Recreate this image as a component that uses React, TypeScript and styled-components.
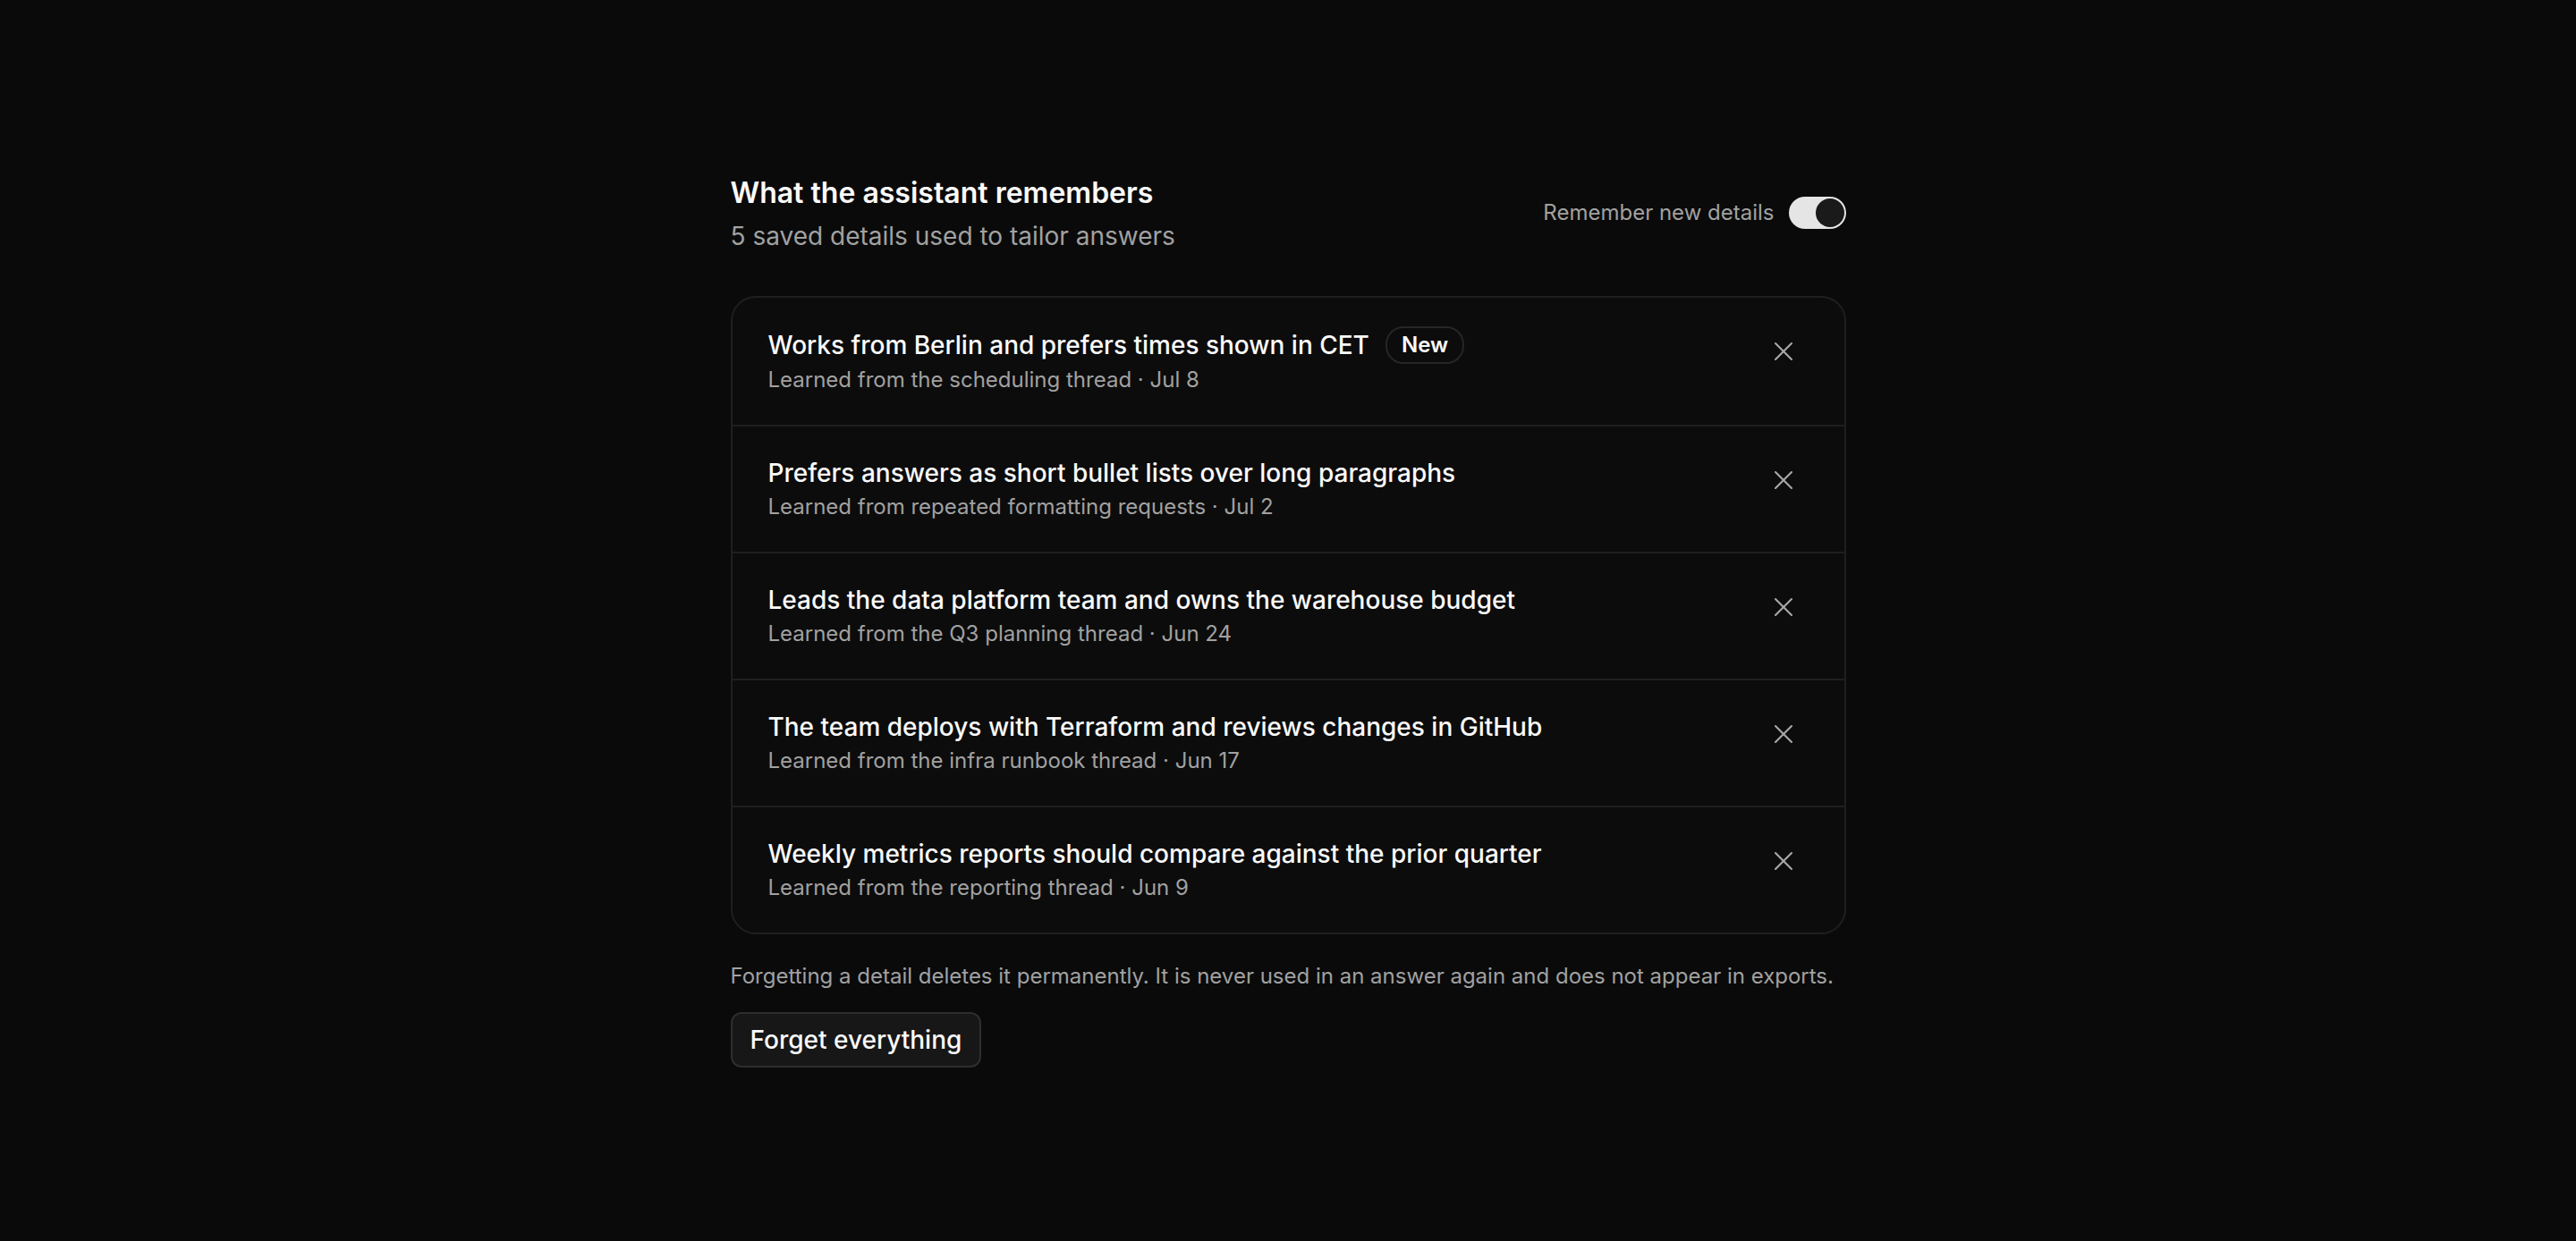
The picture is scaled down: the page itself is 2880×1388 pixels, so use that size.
import { useState } from "react";
import styled, { createGlobalStyle } from "styled-components";
import { X } from "lucide-react";

// ------------------------------------- STYLES -------------------------------------

const GlobalStyle = createGlobalStyle`
  html, body {
    margin: 0;
    background: #0a0a0a;
  }

  body {
    font-family: Inter, "Noto Sans", sans-serif;
    color: #fafafa;
    -webkit-font-smoothing: antialiased;
  }
`;

const Page = styled.main`
  min-height: 100vh;
  display: flex;
  justify-content: center;
  padding-top: 196px;
  box-sizing: border-box;
`;

const Panel = styled.section`
  width: 1247px;
  display: flex;
  flex-direction: column;
`;

const Header = styled.header`
  display: flex;
  justify-content: space-between;
  align-items: center;
  margin-bottom: 47px;
`;

const Titles = styled.div`
  display: flex;
  flex-direction: column;
  gap: 8px;
`;

const Heading = styled.h1`
  margin: 0;
  font-size: 32px;
  line-height: 40px;
  font-weight: 600;
  color: #fafafa;
`;

const Subtitle = styled.p`
  margin: 0;
  font-size: 28px;
  line-height: 40px;
  color: #a1a1a1;
`;

const ToggleLabel = styled.label`
  display: flex;
  align-items: center;
  gap: 16px;
  padding-bottom: 5px;
  font-size: 24px;
  color: #a1a1a1;
  cursor: pointer;
`;

const Track = styled.button<{ $on: boolean }>`
  position: relative;
  width: 64px;
  height: 36px;
  padding: 0;
  border: 0;
  border-radius: 18px;
  background: ${(p) => (p.$on ? "#e5e5e5" : "#3a3a3a")};
  cursor: pointer;
`;

const Knob = styled.span<{ $on: boolean }>`
  position: absolute;
  top: 2px;
  left: ${(p) => (p.$on ? "30px" : "2px")};
  width: 32px;
  height: 32px;
  border-radius: 50%;
  background: #1a1a1a;
  transition: left 0.15s ease;
`;

const List = styled.ul`
  margin: 0;
  padding: 0;
  list-style: none;
  border: 2px solid #1f1f1f;
  border-radius: 28px;
  background: #0c0c0c;
  overflow: hidden;
`;

const Row = styled.li`
  display: flex;
  align-items: flex-start;
  justify-content: space-between;
  padding: 32px 40px;

  & + & {
    border-top: 2px solid #1f1f1f;
  }
`;

const RowText = styled.div`
  display: flex;
  flex-direction: column;
`;

const RowTitle = styled.div`
  display: flex;
  align-items: center;
  gap: 18px;
  font-size: 28px;
  line-height: 40px;
  font-weight: 500;
  color: #fafafa;
`;

const Badge = styled.span`
  display: inline-flex;
  align-items: center;
  height: 38px;
  padding: 0 16px;
  border: 2px solid #262626;
  border-radius: 20px;
  font-size: 24px;
  font-weight: 600;
  color: #fafafa;
`;

const Meta = styled.div`
  font-size: 24px;
  line-height: 36px;
  color: #a1a1a1;
`;

const ForgetButton = styled.button`
  display: flex;
  align-items: center;
  justify-content: center;
  width: 56px;
  height: 56px;
  padding: 0;
  border: 0;
  background: transparent;
  color: #a8a8a8;
  cursor: pointer;
`;

const Note = styled.p`
  margin: 29px 0 22px;
  font-size: 24px;
  line-height: 36px;
  color: #a1a1a1;
`;

const ClearButton = styled.button`
  align-self: flex-start;
  height: 62px;
  padding: 0 20px;
  border: 2px solid #2e2e2e;
  border-radius: 12px;
  background: #171717;
  font-family: inherit;
  font-size: 28px;
  font-weight: 500;
  color: #fafafa;
  cursor: pointer;
`;

// ------------------------------------- COMPONENT -------------------------------------

type Memory = {
  id: number;
  text: string;
  source: string;
  date: string;
  isNew?: boolean;
};

const memories: Memory[] = [
  {
    id: 1,
    text: "Works from Berlin and prefers times shown in CET",
    source: "the scheduling thread",
    date: "Jul 8",
    isNew: true,
  },
  {
    id: 2,
    text: "Prefers answers as short bullet lists over long paragraphs",
    source: "repeated formatting requests",
    date: "Jul 2",
  },
  {
    id: 3,
    text: "Leads the data platform team and owns the warehouse budget",
    source: "the Q3 planning thread",
    date: "Jun 24",
  },
  {
    id: 4,
    text: "The team deploys with Terraform and reviews changes in GitHub",
    source: "the infra runbook thread",
    date: "Jun 17",
  },
  {
    id: 5,
    text: "Weekly metrics reports should compare against the prior quarter",
    source: "the reporting thread",
    date: "Jun 9",
  },
];

const App = () => {
  const [remember, setRemember] = useState(true);
  const [items, setItems] = useState(memories);

  return (
    <>
      <GlobalStyle />
      <Page>
        <Panel>
          <Header>
            <Titles>
              <Heading>What the assistant remembers</Heading>
              <Subtitle>{items.length} saved details used to tailor answers</Subtitle>
            </Titles>
            <ToggleLabel>
              Remember new details
              <Track
                type="button"
                role="switch"
                aria-checked={remember}
                $on={remember}
                onClick={() => setRemember(!remember)}
              >
                <Knob $on={remember} />
              </Track>
            </ToggleLabel>
          </Header>

          <List>
            {items.map((m) => (
              <Row key={m.id}>
                <RowText>
                  <RowTitle>
                    {m.text}
                    {m.isNew && <Badge>New</Badge>}
                  </RowTitle>
                  <Meta>
                    Learned from {m.source} · {m.date}
                  </Meta>
                </RowText>
                <ForgetButton
                  aria-label="Forget"
                  onClick={() => setItems(items.filter((i) => i.id !== m.id))}
                >
                  <X size={36} strokeWidth={1.4} />
                </ForgetButton>
              </Row>
            ))}
          </List>

          <Note>
            Forgetting a detail deletes it permanently. It is never used in an
            answer again and does not appear in exports.
          </Note>

          <ClearButton onClick={() => setItems([])}>Forget everything</ClearButton>
        </Panel>
      </Page>
    </>
  );
};

export default App;
